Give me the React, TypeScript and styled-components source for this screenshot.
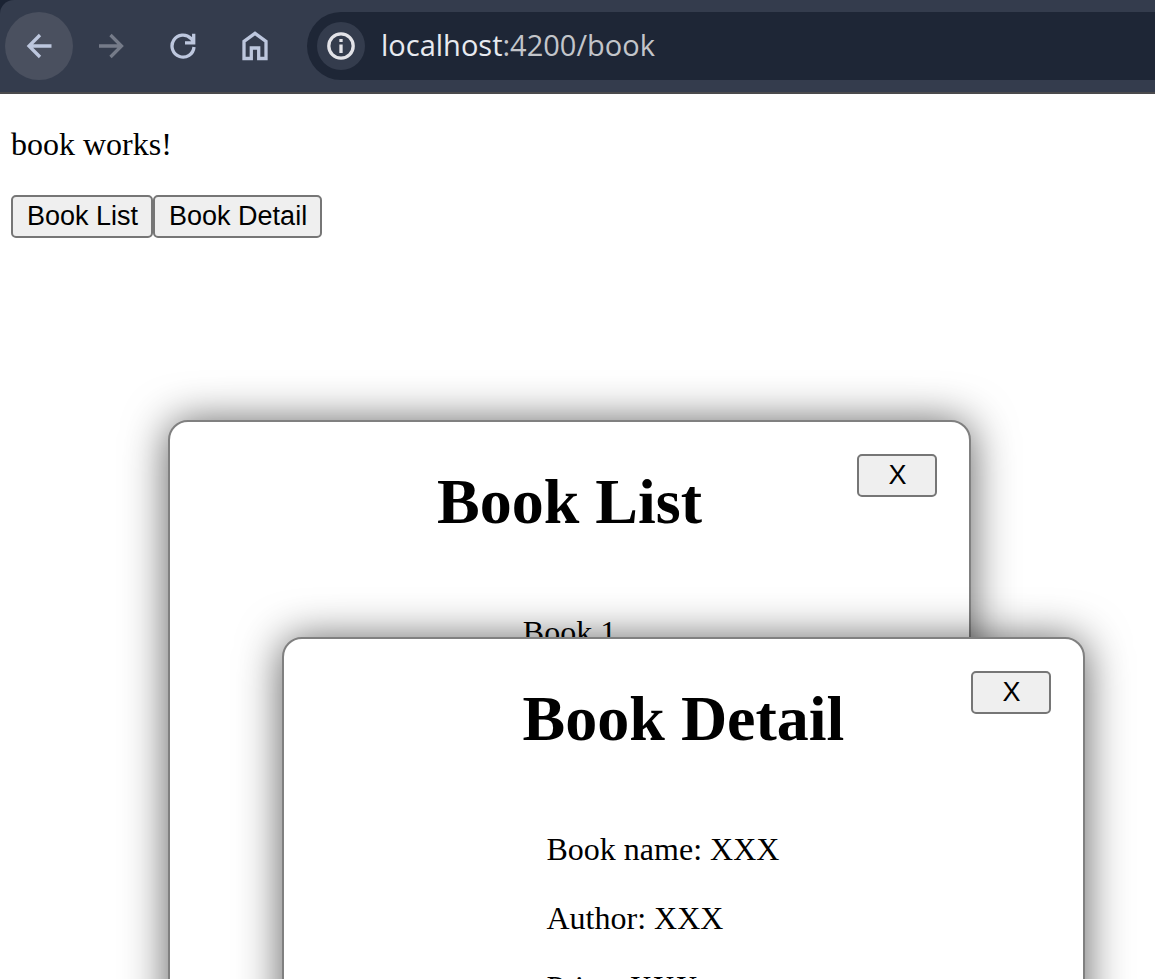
import React, { useState } from 'react';
import styled, { createGlobalStyle } from 'styled-components';

const GlobalStyle = createGlobalStyle`
  * {
    box-sizing: border-box;
  }
  html {
    background: #fff;
    overflow: hidden;
  }
  body {
    margin: 0;
    color: #000;
    font: 32px/37px 'Liberation Serif', 'Times New Roman', serif;
  }
`;

const Frame = styled.div`
  background: #1b2333;
`;

const Toolbar = styled.header`
  display: flex;
  align-items: center;
  height: 94px;
  padding: 0 0 0 5px;
  background: #343c4d;
  border-bottom: 2px solid #4a4a4c;
  border-top-left-radius: 14px;
`;

const NavButtons = styled.nav`
  display: flex;
  gap: 4px;
`;

const NavButton = styled.button<{ $active?: boolean }>`
  display: grid;
  place-items: center;
  width: 68px;
  height: 68px;
  padding: 0;
  border: 0;
  border-radius: 50%;
  background: ${(p) => (p.$active ? '#4a505f' : 'transparent')};
  color: #bdc7de;

  &:disabled {
    color: #757b89;
  }
`;

const Icon = styled.svg`
  display: block;
  fill: none;
  stroke: currentColor;
  stroke-width: 3.3;
`;

const AddressBar = styled.form`
  display: flex;
  flex: 1;
  align-items: center;
  gap: 16px;
  height: 68px;
  margin-left: 18px;
  padding-left: 10px;
  border-radius: 34px 0 0 34px;
  background: #1e2636;
`;

const SiteInfo = styled.button`
  display: grid;
  place-items: center;
  width: 48px;
  height: 48px;
  padding: 0;
  border: 0;
  border-radius: 50%;
  background: #343c4d;
  color: #e3e3e8;
`;

const Address = styled.a`
  padding-bottom: 2px;
  color: #c3c5ca;
  font: 29px/40px 'Open Sans', 'Noto Sans', sans-serif;
  text-decoration: none;
`;

const Host = styled.span`
  color: #e8eaf0;
`;

const Page = styled.main`
  padding: 0 11px;
`;

const Text = styled.p`
  margin: 32px 0;
`;

const ButtonRow = styled.div`
  display: flex;
`;

const Button = styled.button`
  height: 43px;
  padding: 0 13px 1px 14px;
  border: 2px solid #767676;
  border-radius: 5px;
  background: #efefef;
  color: #000;
  font: 27px/31px 'Liberation Sans', Arial, sans-serif;
`;

const Dialog = styled.section<{ $left: number; $top: number }>`
  position: absolute;
  left: ${(p) => p.$left}px;
  top: ${(p) => p.$top}px;
  display: flex;
  flex-direction: column;
  align-items: center;
  width: 803px;
  min-height: 800px;
  border: 2px solid #808080;
  border-radius: 20px;
  background: #fff;
  box-shadow: 0 2px 44px rgba(0, 0, 0, 0.64);
`;

const CloseButton = styled(Button)`
  position: absolute;
  top: 32px;
  right: 32px;
  width: 80px;
`;

const Title = styled.h1`
  margin: 43px 0;
  font-size: 64px;
  line-height: 74px;
`;

const DetailBody = styled.div`
  min-width: 274px;
`;

type DialogName = 'list' | 'detail';

export default function App() {
  const [open, setOpen] = useState<Record<DialogName, boolean>>({ list: true, detail: true });
  const show = (name: DialogName, value: boolean) => setOpen((o) => ({ ...o, [name]: value }));

  return (
    <>
      <GlobalStyle />
      <Frame>
        <Toolbar>
          <NavButtons aria-label="Browser">
            <NavButton $active aria-label="Back">
              <Icon width="26" height="26" viewBox="0 0 26 26">
                <path d="M25.500 13H3.500M14 2L3 13l11 11" />
              </Icon>
            </NavButton>
            <NavButton disabled aria-label="Forward">
              <Icon width="26" height="26" viewBox="0 0 26 26">
                <path d="M1 13h22M12.500 2L23.500 13l-11 11" />
              </Icon>
            </NavButton>
            <NavButton aria-label="Reload">
              <Icon width="28" height="28" viewBox="0 0 28 28">
                <path d="M25 15A11 11 0 1 1 22 6.500L24.500 9.500M24.700 1.800v9H16" />
              </Icon>
            </NavButton>
            <NavButton aria-label="Home">
              <Icon width="28" height="30" viewBox="0 0 28 30">
                <path d="M3 10.300L14 2.300l11 8v17.200H17.700V17h-7.400v10.500H3z" />
              </Icon>
            </NavButton>
          </NavButtons>
          <AddressBar onSubmit={(e) => e.preventDefault()}>
            <SiteInfo type="button" aria-label="Site information">
              <Icon width="28" height="28" viewBox="0 0 28 28">
                <circle cx="14" cy="14" r="12.200" />
                <path d="M14 12.500V21M14 7v3" />
              </Icon>
            </SiteInfo>
            <Address href="/book">
              <Host>localhost</Host>:4200/book
            </Address>
          </AddressBar>
        </Toolbar>
      </Frame>
      <Page>
        <Text>book works!</Text>
        <ButtonRow>
          <Button onClick={() => show('list', true)}>Book List</Button>
          <Button onClick={() => show('detail', true)}>Book Detail</Button>
        </ButtonRow>
      </Page>
      {open.list && (
        <Dialog $left={168} $top={420} role="dialog" aria-labelledby="list-title">
          <CloseButton onClick={() => show('list', false)}>X</CloseButton>
          <Title id="list-title">Book List</Title>
          <Text>Book 1</Text>
        </Dialog>
      )}
      {open.detail && (
        <Dialog $left={282} $top={637} role="dialog" aria-labelledby="detail-title">
          <CloseButton onClick={() => show('detail', false)}>X</CloseButton>
          <Title id="detail-title">Book Detail</Title>
          <DetailBody>
            <Text>Book name: XXX</Text>
            <Text>Author: XXX</Text>
            <Text>Price: XXX</Text>
          </DetailBody>
        </Dialog>
      )}
    </>
  );
}
